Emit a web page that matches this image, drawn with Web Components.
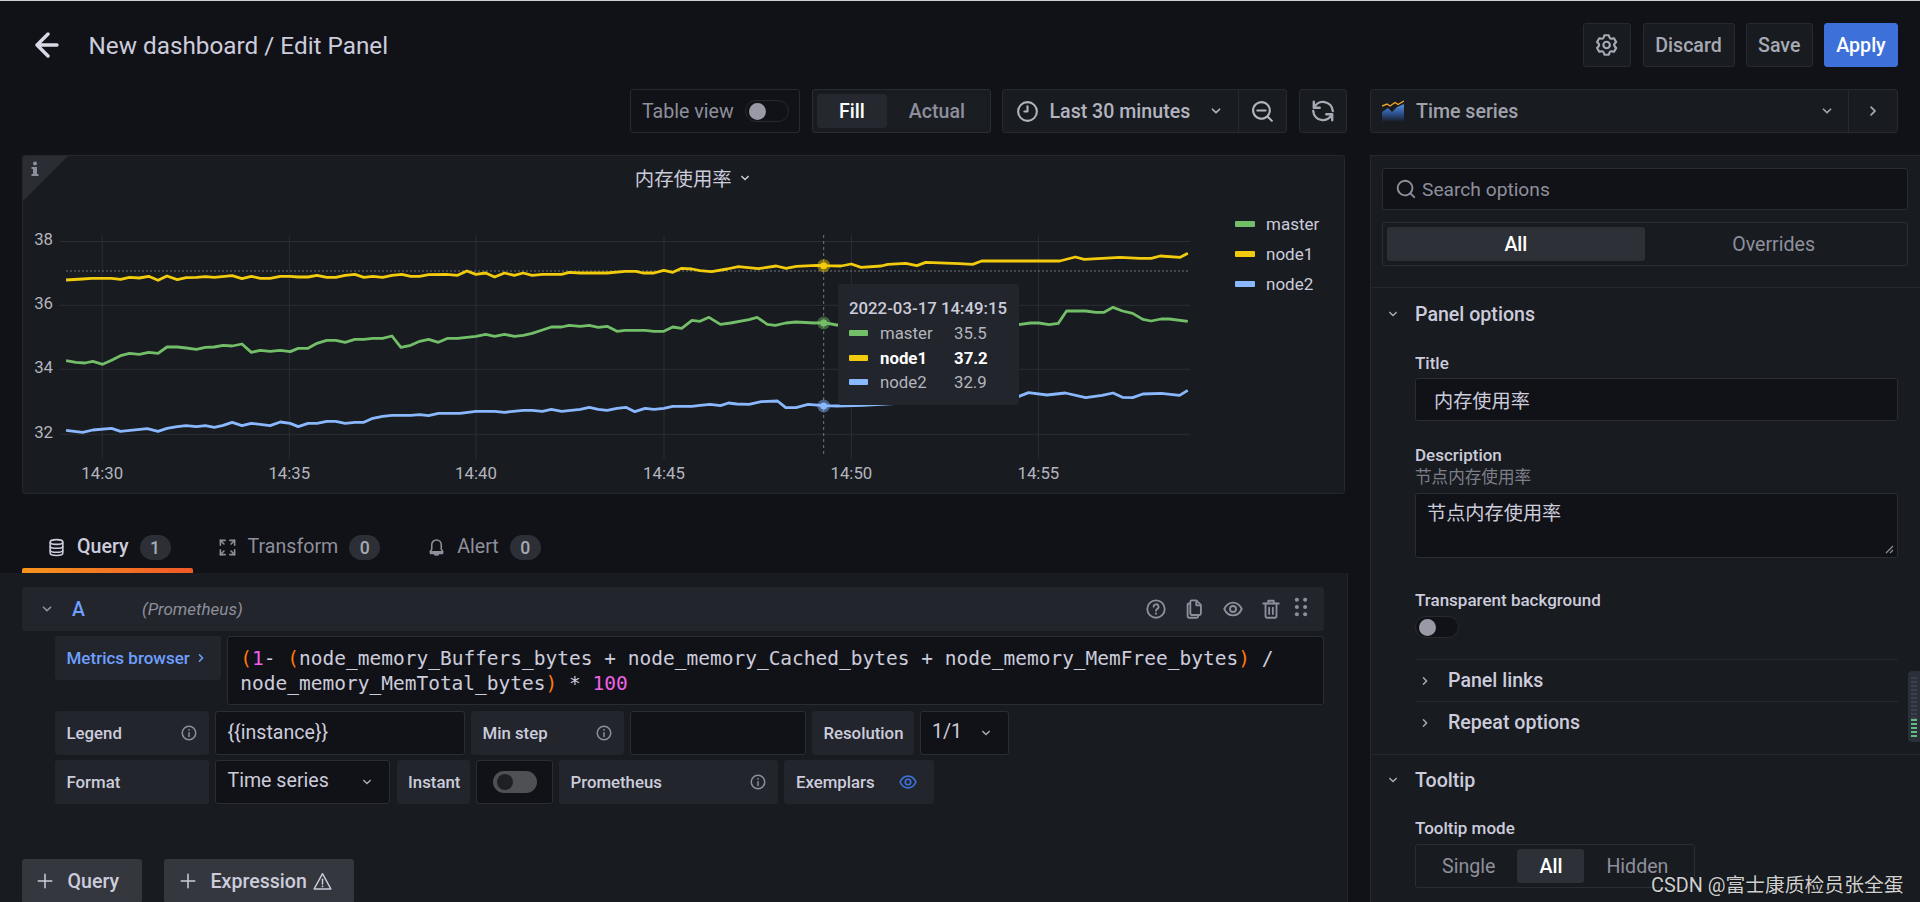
<!DOCTYPE html>
<html lang="zh">
<head>
<meta charset="utf-8">
<title>Edit Panel</title>
<style>
  html, body { margin: 0; background: #111217; }
  body { font-family: Roboto, "Noto Sans CJK SC", sans-serif; color: #ccccdc; }
</style>
</head>
<body>
<gf-page>
  <gf-header slot="header"></gf-header>
  <gf-subbar slot="subbar"></gf-subbar>
  <div slot="left">
    <gf-chart-panel></gf-chart-panel>
    <gf-query-tabs></gf-query-tabs>
    <gf-query-editor></gf-query-editor>
  </div>
  <gf-options slot="right"></gf-options>
</gf-page>

<script>
const ICONS = {
  down: `<path fill="currentColor" d="M17,9.17a1,1,0,0,0-1.41,0L12,12.71,8.46,9.17a1,1,0,0,0-1.41,0,1,1,0,0,0,0,1.42l4.24,4.24a1,1,0,0,0,1.42,0L17,10.59A1,1,0,0,0,17,9.17Z"/>`,
  right: `<path fill="currentColor" d="M14.83,11.29,10.59,7.05a1,1,0,0,0-1.42,0,1,1,0,0,0,0,1.41L12.71,12,9.17,15.54a1,1,0,0,0,0,1.41,1,1,0,0,0,.71.29,1,1,0,0,0,.71-.29l4.24-4.24A1,1,0,0,0,14.83,11.29Z"/>`,
  cog: `<path fill="currentColor" d="M19.9,12.66a1,1,0,0,1,0-1.32L21.18,9.9a1,1,0,0,0,.12-1.17l-2-3.46a1,1,0,0,0-1.07-.48l-1.88.38a1,1,0,0,1-1.15-.66l-.61-1.83A1,1,0,0,0,13.64,2h-4a1,1,0,0,0-1,.68L8.08,4.51a1,1,0,0,1-1.15.66L5,4.79A1,1,0,0,0,4,5.27L2,8.73A1,1,0,0,0,2.1,9.9l1.27,1.44a1,1,0,0,1,0,1.32L2.1,14.1A1,1,0,0,0,2,15.27l2,3.46a1,1,0,0,0,1.07.48l1.88-.38a1,1,0,0,1,1.15.66l.61,1.83a1,1,0,0,0,1,.68h4a1,1,0,0,0,.95-.68l.61-1.83a1,1,0,0,1,1.15-.66l1.88.38a1,1,0,0,0,1.07-.48l2-3.46a1,1,0,0,0-.12-1.17ZM18.41,14l.8.9-1.28,2.22-1.18-.24a3,3,0,0,0-3.45,2L12.92,20H10.36L10,18.86a3,3,0,0,0-3.45-2l-1.18.24L4.07,14.89l.8-.9a3,3,0,0,0,0-4l-.8-.9L5.35,6.89l1.18.24a3,3,0,0,0,3.45-2L10.36,4h2.56l.38,1.14a3,3,0,0,0,3.45,2l1.18-.24,1.28,2.22-.8.9A3,3,0,0,0,18.41,14ZM11.64,8a4,4,0,1,0,4,4A4,4,0,0,0,11.64,8Zm0,6a2,2,0,1,1,2-2A2,2,0,0,1,11.64,14Z"/>`,
  clock: `<path fill="currentColor" d="M12,2A10,10,0,1,0,22,12,10,10,0,0,0,12,2Zm0,18a8,8,0,1,1,8-8A8,8,0,0,1,12,20Zm0-14a1,1,0,0,0-1,1v4H9a1,1,0,0,0,0,2h3a1,1,0,0,0,1-1V7A1,1,0,0,0,12,6Z"/>`,
  search: `<path fill="currentColor" d="M21.71,20.29,18,16.61A9,9,0,1,0,16.61,18l3.68,3.68a1,1,0,0,0,1.42,0A1,1,0,0,0,21.71,20.29ZM11,18a7,7,0,1,1,7-7A7,7,0,0,1,11,18Z"/>`,
  zoomout: `<path fill="currentColor" d="M21.71,20.29,18,16.61A9,9,0,1,0,16.61,18l3.68,3.68a1,1,0,0,0,1.42,0A1,1,0,0,0,21.71,20.29ZM11,18a7,7,0,1,1,7-7A7,7,0,0,1,11,18ZM15,10H7a1,1,0,0,0,0,2h8a1,1,0,0,0,0-2Z"/>`,
  sync: `<g fill="none" stroke="currentColor" stroke-width="2.200" stroke-linecap="round" stroke-linejoin="round"><path d="M3.500 3.500v5.500H9"/><path d="M20.500 20.500V15H15"/><path d="M3.800 9A9 9 0 0 1 21 12"/><path d="M20.200 15A9 9 0 0 1 3 12"/></g>`,
  info: `<g fill="none" stroke="currentColor" stroke-width="2" stroke-linecap="round"><circle cx="12" cy="12" r="9"/><path d="M12 11.500v5"/></g><circle cx="12" cy="7.800" r="1.200" fill="currentColor"/>`,
  help: `<g fill="none" stroke="currentColor" stroke-width="2" stroke-linecap="round"><circle cx="12" cy="12" r="9.500"/><path d="M9.400 9.500a2.700 2.700 0 1 1 4 2.400c-.9.500-1.400 1-1.400 2"/></g><circle cx="12" cy="17" r="1.200" fill="currentColor"/>`,
  copy: `<g fill="none" stroke="currentColor" stroke-width="2" stroke-linejoin="round"><path d="M9.500 2.500h5l5 5V17a1.500 1.500 0 0 1-1.500 1.500H9.500A1.500 1.500 0 0 1 8 17V4a1.500 1.500 0 0 1 1.500-1.500Z"/><path d="M14.500 2.500V8h5"/><path d="M8 6H6.500A1.500 1.500 0 0 0 5 7.500V20a1.500 1.500 0 0 0 1.500 1.500H15a1.500 1.500 0 0 0 1.500-1.500v-1.500"/></g>`,
  eye: `<g fill="none" stroke="currentColor" stroke-width="2"><path d="M2.500 12C5 6.500 8.500 5 12 5s7 1.500 9.500 7C19 17.500 15.500 19 12 19S5 17.500 2.500 12Z"/><circle cx="12" cy="12" r="3.300"/></g>`,
  trash: `<g fill="none" stroke="currentColor" stroke-width="2" stroke-linecap="round" stroke-linejoin="round"><path d="M3.500 6h17"/><path d="M9 6V3h6v3"/><path d="M6 6v14a1.500 1.500 0 0 0 1.500 1.500h9A1.500 1.500 0 0 0 18 20V6"/><path d="M10 10.500v7M14 10.500v7"/></g>`,
  grip: `<g fill="currentColor"><circle cx="7.500" cy="4" r="2.200"/><circle cx="16.500" cy="4" r="2.200"/><circle cx="7.500" cy="12" r="2.200"/><circle cx="16.500" cy="12" r="2.200"/><circle cx="7.500" cy="20" r="2.200"/><circle cx="16.500" cy="20" r="2.200"/></g>`,
  database: `<g fill="none" stroke="currentColor" stroke-width="2"><ellipse cx="12" cy="5" rx="8" ry="3"/><path d="M4 5v14c0 1.700 3.600 3 8 3s8-1.300 8-3V5"/><path d="M4 10c0 1.700 3.600 3 8 3s8-1.300 8-3"/><path d="M4 15c0 1.700 3.600 3 8 3s8-1.300 8-3"/></g>`,
  transform: `<g fill="none" stroke="currentColor" stroke-width="2" stroke-linecap="round" stroke-linejoin="round"><path d="M3 9V3h6"/><path d="M3 3l4.500 4.500"/><path d="M15 3h6v6"/><path d="M21 3l-4.500 4.500"/><path d="M21 15v6h-6"/><path d="M21 21l-4.500-4.500"/><path d="M9 21H3v-6"/><path d="M3 21l4.500-4.500"/></g>`,
  bell: `<g fill="none" stroke="currentColor" stroke-width="2" stroke-linecap="round" stroke-linejoin="round"><path d="M12 2.500a6 6 0 0 1 6 6V14l2 3.500H4L6 14V8.500a6 6 0 0 1 6-6Z"/><path d="M4.500 17.500h15v2h-15Z"/><path d="M9.500 19.500c0 1.300 1.100 2 2.500 2s2.500-.7 2.500-2"/></g>`,
  plus: `<path fill="none" stroke="currentColor" stroke-width="2" stroke-linecap="round" d="M12 3v18M3 12h18"/>`,
  warn: `<g fill="none" stroke="currentColor" stroke-width="1.600" stroke-linejoin="round" stroke-linecap="round"><path d="M12 3 2.500 20.500h19Z"/><path d="M12 9.500v5.500"/></g><circle cx="12" cy="17.700" r="1" fill="currentColor"/>`,
};

class GfIcon extends HTMLElement {
  connectedCallback() {
    const size = this.getAttribute("size") || 20;
    this.attachShadow({ mode: "open" }).innerHTML = `
      <style>:host { display: inline-flex; flex: none; }</style>
      <svg width="${size}" height="${size}" viewBox="0 0 24 24">${ICONS[this.getAttribute("name")]}</svg>`;
  }
}

// outlined toolbar button; "variant" is primary or left out
class GfButton extends HTMLElement {
  constructor() {
    super();
    this.attachShadow({ mode: "open" }).innerHTML = `
      <style>
        :host {
          display: inline-flex; align-items: center; justify-content: center; box-sizing: border-box;
          height: 44px; background: #181b1f; border: 1px solid #26292f; border-radius: 3px;
          color: #a7a9b4; font: 500 19.600px Roboto, sans-serif;
        }
        :host([variant="primary"]) { background: #3d71d9; border-color: #3d71d9; color: #fff; }
      </style>
      <slot></slot>`;
  }
}

class GfSwitch extends HTMLElement {
  constructor() {
    super();
    this.attachShadow({ mode: "open" }).innerHTML = `
      <style>
        :host { display: inline-block; box-sizing: border-box; width: 44px; height: 22px; border-radius: 11px;
                border: 1px solid #26292f; background: #111217; padding: 1.500px 3px; flex: none; }
        i { display: block; width: 17px; height: 17px; border-radius: 50%; background: #9a9aa6; }
        :host([dark]) { background: #4f5054; border: 0; padding: 3px 4px; }
        :host([dark]) i { background: #1e2024; width: 16px; height: 16px; }
      </style>
      <i></i>`;
  }
}

class GfRadio extends HTMLElement {
  connectedCallback() {
    const active = this.getAttribute("active");
    const items = this.getAttribute("options").split(",").map((o) =>
      `<span class="${o === active ? "on" : ""}">${o}</span>`).join("");
    this.attachShadow({ mode: "open" }).innerHTML = `
      <style>
        :host { display: inline-flex; box-sizing: border-box; height: 44px; padding: 4px; background: #111217;
                border: 1px solid #2a2d33; border-radius: 3px; font: 400 19.600px Roboto, sans-serif; color: #8e8f9c; }
        span { display: flex; align-items: center; justify-content: center; padding: 0 22px; border-radius: 3px; }
        .on { background: #2d3036; color: #fff; font-weight: 500; }
        :host([fill]) { display: flex; }
        :host([fill]) span { flex: 1; }
        :host([tint]) span { background: #1a1d21; }
        :host([tint]) span.on { background: #25282e; }
        :host([tint]) { background: #181b1f; }
        :host([panel]) { background: #181b1f; }
      </style>
      ${items}`;
  }
}

class GfHeader extends HTMLElement {
  constructor() {
    super();
    this.attachShadow({ mode: "open" }).innerHTML = `
      <style>
        :host { display: flex; align-items: center; height: 44px; padding: 0 22px 0 35px; }
        h1 { margin: 0 0 0 29.500px; font: 400 24.300px Roboto, sans-serif; color: #ccccdc; flex: 1; }
        gf-button { margin-left: 11.500px; }
        svg { flex: none; }
      </style>
      <svg width="24" height="26" viewBox="0 0 24 26"><path fill="none" stroke="#d8d9e6" stroke-width="3.400" stroke-linecap="round" stroke-linejoin="round" d="M22 13H2M13 2 2 13l11 11"/></svg>
      <h1>New dashboard / Edit Panel</h1>
      <gf-button style="width:48.500px"><gf-icon name="cog" size="26"></gf-icon></gf-button>
      <gf-button style="width:92px">Discard</gf-button>
      <gf-button style="width:66.500px">Save</gf-button>
      <gf-button variant="primary" style="width:74px">Apply</gf-button>`;
  }
}

class GfSubbar extends HTMLElement {
  constructor() {
    super();
    this.attachShadow({ mode: "open" }).innerHTML = `
      <style>
        :host { display: flex; height: 44px; margin-top: 22px; padding-left: 630px; padding-right: 22px; font: 500 19.600px Roboto, sans-serif; }
        .box { display: flex; align-items: center; box-sizing: border-box; height: 44px; border: 1px solid #26292f; border-radius: 3px; }
        .table { width: 170px; padding-left: 11px; font-weight: 400; color: #8e8f9c; gap: 11px; }
        .time { width: 285px; background: #181b1f; color: #b3b4c0; margin-left: 11px; }
        .time .pick { display: flex; align-items: center; width: 236px; height: 100%; box-sizing: border-box; padding: 0 12px 0 12px; border-right: 1px solid #26292f; }
        .time .pick span { margin-left: 10px; flex: 1; }
        .time .out { flex: 1; display: flex; justify-content: center; }
        .sync { width: 48.500px; margin-left: 12px; background: #181b1f; color: #a7a9b4; justify-content: center; }
        .viz { width: 527.500px; margin-left: 23px; background: #181b1f; color: #a0a2ad; }
        .viz .sel { display: flex; align-items: center; height: 100%; width: 478px; box-sizing: border-box; padding: 0 11px 0 11px; border-right: 1px solid #26292f; }
        .viz .sel span { margin-left: 12px; flex: 1; }
        .viz .next { flex: 1; display: flex; justify-content: center; }
        gf-radio { margin-left: 12px; font-weight: 500; }
      </style>
      <div class="box table">Table view <gf-switch></gf-switch></div>
      <gf-radio tint options="Fill,Actual" active="Fill" style="width:178.500px"></gf-radio>
      <div class="box time">
        <div class="pick"><gf-icon name="clock" size="25"></gf-icon><span>Last 30 minutes</span><gf-icon name="down" size="20"></gf-icon></div>
        <div class="out"><gf-icon name="zoomout" size="25"></gf-icon></div>
      </div>
      <div class="box sync"><gf-icon name="sync" size="26"></gf-icon></div>
      <div class="box viz">
        <div class="sel">
          <svg width="22" height="22" viewBox="0 0 22 22">
            <defs><linearGradient id="vg" x1="0" y1="0" x2="0" y2="1"><stop offset="0" stop-color="#5b8fe0"/><stop offset=".55" stop-color="#2c4f8c"/><stop offset="1" stop-color="#181b1f"/></linearGradient></defs>
            <path fill="url(#vg)" d="M0 12 6 8l4 4 5-5 7-3v18H0Z"/>
            <path fill="none" stroke="#f5a623" stroke-width="1.400" d="M0 6l5-2 3 2 5-3.500 3 2 6-3.500"/>
          </svg>
          <span>Time series</span><gf-icon name="down" size="20"></gf-icon>
        </div>
        <div class="next"><gf-icon name="right" size="22"></gf-icon></div>
      </div>`;
  }
}

// traced from the reference, in absolute page pixels after the two crop mappings below
const fromLeft = (p) => p.map(([x, y]) => [x / 2.24, y / 3 + 200]);
const fromRight = (p) => p.map(([x, y]) => [x / 2.45 + 700, y / 3 + 220]);
const SERIES = [
  { color: "#73bf69", pts: [
    ...fromLeft([[148,482],[170,487],[190,489],[208,484],[230,493],[250,481],[270,467],[290,460],[312,463],[333,457],[354,460],[374,441],[397,441],[417,444],[440,448],[460,442],[480,441],[500,436],[520,438],[542,432],[563,457],[583,451],[605,454],[628,451],[650,455],[668,445],[690,445],[710,430],[732,421],[752,421],[773,427],[795,418],[815,418],[835,415],[857,415],[878,408],[898,442],[920,436],[940,424],[960,418],[982,427],[1003,415],[1025,415],[1066,409],[1088,403],[1108,409],[1130,403],[1152,409],[1172,406],[1192,400],[1215,390],[1235,381],[1258,381],[1275,376],[1300,379],[1320,376],[1340,382],[1360,379],[1382,394],[1400,391],[1445,391],[1465,394],[1487,394],[1507,381],[1527,385],[1550,361],[1568,364]]),
    ...fromRight([[22,292],[50,313],[75,309],[120,299],[140,292],[165,313],[185,316],[210,309],[235,306],[280,309],[303,308],[335,315],[780,314],[810,309],[830,309],[855,314],[878,310],[898,273],[945,273],[970,277],[990,277],[1012,262],[1035,273],[1060,280],[1085,298],[1105,303],[1130,297],[1150,297],[1195,304]]),
  ], dot: [823.700, 323] },
  { color: "#f2cc0c", pts: [
    ...fromLeft([[148,240],[185,237],[205,235],[250,235],[270,238],[290,232],[312,234],[333,229],[354,241],[374,228],[397,239],[417,233],[440,232],[460,230],[480,232],[520,227],[542,236],[563,229],[583,235],[605,235],[628,229],[650,229],[668,231],[690,231],[710,226],[732,232],[752,232],[773,226],[795,223],[815,232],[835,229],[857,232],[878,226],[900,223],[920,229],[940,229],[960,224],[1000,223],[1025,226],[1046,213],[1066,223],[1088,219],[1108,231],[1130,219],[1152,226],[1172,219],[1192,226],[1215,223],[1258,223],[1275,217],[1300,219],[1360,219],[1400,214],[1425,214],[1440,219],[1465,219],[1487,211],[1507,217],[1527,205],[1550,207],[1568,212]]),
    ...[[205,815],[240,807],[265,800],[310,806],[350,798],[372,805],[395,799],[440,796],[456,797],[495,798],[518,792],[540,802],[585,798],[600,793],[640,790],[665,797],[685,787],[760,791],[790,793],[810,783],[925,783],[985,783],[1020,771],[1040,778],[1120,772],[1165,775],[1190,775],[1210,768],[1255,772],[1272,760]].map(([x, y]) => [x / 2.24 + 620, y / 3]),
  ], dot: [823.700, 265.700] },
  { color: "#8ab8ff", pts: [
    ...fromLeft([[148,691],[185,697],[208,690],[250,685],[270,694],[330,686],[354,694],[374,685],[397,680],[417,677],[440,680],[460,677],[480,682],[500,676],[520,667],[542,677],[563,670],[605,677],[628,666],[650,670],[668,680],[690,670],[710,670],[732,664],[752,664],[773,670],[795,667],[815,667],[835,655],[857,649],[878,646],[920,646],[940,644],[960,647],[982,640],[1030,640],[1066,634],[1108,634],[1130,637],[1172,631],[1192,631],[1215,634],[1235,628],[1258,634],[1300,628],[1320,622],[1340,628],[1360,631],[1382,625],[1402,622],[1422,635],[1445,625],[1465,628],[1487,625],[1507,619],[1550,619],[1568,616]]),
    ...fromRight([[25,553],[50,557],[70,549],[90,552],[120,553],[150,545],[190,543],[210,563],[235,563],[265,553],[303,557],[335,558],[400,556],[780,530],[805,518],[850,525],[895,519],[945,533],[985,526],[1012,519],[1035,532],[1060,533],[1085,522],[1130,520],[1175,526],[1195,511]]),
  ], dot: [823.700, 406] },
];

class GfChartPanel extends HTMLElement {
  constructor() {
    super();
    const grid = "#2b2e34";
    const hTicks = [[38, 241.500], [36, 305.300], [34, 369.300], [32, 434.300]];
    const vTicks = [["14:30", 102.200], ["14:35", 289.300], ["14:40", 476], ["14:45", 664], ["14:50", 851.400], ["14:55", 1038.400]];
    const lines = SERIES.map((s) =>
      `<polyline fill="none" stroke="${s.color}" stroke-width="2.800" stroke-linejoin="round" points="${s.pts.map((p) => p.join(",")).join(" ")}"/>`).join("");
    const dots = SERIES.map((s) =>
      `<circle cx="${s.dot[0]}" cy="${s.dot[1]}" r="6.500" fill="${s.color}" opacity=".45"/><circle cx="${s.dot[0]}" cy="${s.dot[1]}" r="3.500" fill="${s.color}"/>`).join("");
    const legend = [["master", "#73bf69"], ["node1", "#f2cc0c"], ["node2", "#8ab8ff"]];
    const tipRows = [["master", "35.5", "#73bf69"], ["node1", "37.2", "#f2cc0c", true], ["node2", "32.9", "#8ab8ff"]];

    this.attachShadow({ mode: "open" }).innerHTML = `
      <style>
        :host { display: block; position: relative; box-sizing: border-box; height: 339px; margin-left: 22px; width: 1322.500px;
                background: #181b1f; border: 1px solid #24272d; border-radius: 3px; overflow: hidden; }
        .corner { position: absolute; left: 0; top: 0; width: 0; height: 0; border-top: 45px solid #2a2d33; border-right: 45px solid transparent; }
        .corner-i { position: absolute; left: 6px; top: 5px; }
        .title { display: flex; align-items: center; justify-content: center; height: 45px; padding: 0 0 2px 22px; box-sizing: border-box; font: 400 19.400px Roboto, "Noto Sans CJK SC", sans-serif; color: #ccccdc; gap: 4px; }
        .body { display: flex; }
        svg.plot { display: block; flex: none; }
        svg text { font: 400 16.800px Roboto, sans-serif; fill: #b4b5bf; }
        .legend { margin-left: 44px; padding-top: 8px; font: 400 17px Roboto, sans-serif; color: #ccccdc; }
        .legend div { display: flex; align-items: center; height: 30px; }
        .legend i { display: block; width: 20px; height: 6px; border-radius: 1px; margin-right: 11px; }
        .tip { position: absolute; left: 815px; top: 128px; width: 180.500px; height: 121px; box-sizing: border-box; padding: 13px 11px;
               background: #22252b; border-radius: 3px; font: 400 16.800px Roboto, sans-serif; color: #b4b5bf; }
        .tip b { display: block; font-weight: 500; color: #ccccdc; font-size: 16.800px; line-height: 22px; white-space: nowrap; margin-bottom: 2px; }
        .tip .row { display: flex; align-items: center; height: 24.500px; }
        .tip i { display: block; width: 19px; height: 6px; border-radius: 1px; margin-right: 12px; }
        .tip .name { width: 74px; }
        .tip .strong { font-weight: 700; color: #fff; }
      </style>
      <div class="corner"></div>
      <svg class="corner-i" width="12" height="16" viewBox="0 0 12 16"><circle cx="6" cy="2.500" r="2" fill="#8e8f9c"/><path fill="#8e8f9c" d="M2.500 6h5.500v7h1.500v2H2.500v-2H4V8H2.500Z"/></svg>
      <div class="title">内存使用率 <gf-icon name="down" size="18"></gf-icon></div>
      <div class="body">
        <svg class="plot" width="1168" height="293" viewBox="23 201 1168 293">
          ${hTicks.map(([, y]) => `<line x1="60" x2="1190" y1="${y}" y2="${y}" stroke="${grid}"/>`).join("")}
          ${vTicks.map(([, x]) => `<line x1="${x}" x2="${x}" y1="235" y2="459" stroke="${grid}"/>`).join("")}
          ${hTicks.map(([v, y]) => `<text x="53" y="${y + 3.500}" text-anchor="end">${v}</text>`).join("")}
          ${vTicks.map(([t, x]) => `<text x="${x}" y="479" text-anchor="middle">${t}</text>`).join("")}
          <line x1="66" x2="1190" y1="271" y2="271" stroke="#6f7780" stroke-dasharray="2 2"/>
          <line x1="823.700" x2="823.700" y1="235" y2="454" stroke="#6f7780" stroke-dasharray="3 3"/>
          ${lines}${dots}
        </svg>
        <div class="legend">${legend.map(([n, c]) => `<div><i style="background:${c}"></i>${n}</div>`).join("")}</div>
      </div>
      <div class="tip">
        <b>2022-03-17 14:49:15</b>
        ${tipRows.map(([n, v, c, s]) => `<div class="row ${s ? "strong" : ""}"><i style="background:${c}"></i><span class="name">${n}</span><span>${v}</span></div>`).join("")}
      </div>`;
  }
}

class GfQueryTabs extends HTMLElement {
  constructor() {
    super();
    const tabs = [["database", "Query", "1", true], ["transform", "Transform", "0"], ["bell", "Alert", "0"]];
    this.attachShadow({ mode: "open" }).innerHTML = `
      <style>
        :host { display: flex; height: 79px; padding: 41px 0 0 22px; box-sizing: border-box; font: 500 19.600px Roboto, sans-serif; color: #8e8f9c; }
        .tab .row { display: flex; align-items: center; height: 25px; padding: 0 22px 0 25px; }
        .tab .line { height: 5px; margin-top: 8px; border-radius: 2px 2px 0 0; }
        .on { color: #ccccdc; }
        .on .line { background: linear-gradient(90deg, #f7941d, #f05a28); }
        .label { margin: 0 11px 0 11px; font-weight: 400; position: relative; top: -1px; }
        .on .label { font-weight: 500; }
        .badge { display: flex; align-items: center; justify-content: center; min-width: 31px; height: 25px; border-radius: 13px; background: #2c3036; color: #a7a9b4; font-size: 17.600px; }
      </style>
      ${tabs.map(([i, t, n, on]) => `
        <div class="tab ${on ? "on" : ""}">
          <div class="row"><gf-icon name="${i}" size="19"></gf-icon><span class="label">${t}</span><span class="badge">${n}</span></div>
          <div class="line"></div>
        </div>`).join("")}`;
  }
}

// grey caption cell of the query form
class GfLabel extends HTMLElement {
  constructor() {
    super();
    this.attachShadow({ mode: "open" }).innerHTML = `
      <style>
        :host { display: flex; align-items: center; justify-content: space-between; box-sizing: border-box; height: 44px;
                padding: 0 11.500px; background: #22252b; border-radius: 3px; font: 500 16.800px Roboto, sans-serif; color: #ccccdc; flex: none; white-space: nowrap; }
        ::slotted(gf-icon) { color: #8e8f9c; }
      </style>
      <slot></slot>`;
  }
}

// dark value cell of the query form
class GfField extends HTMLElement {
  constructor() {
    super();
    this.attachShadow({ mode: "open" }).innerHTML = `
      <style>
        :host { display: flex; align-items: center; justify-content: space-between; box-sizing: border-box; height: 44px;
                padding: 0 13px 0 11px; background: #111217; border: 1px solid #2a2d33; border-radius: 3px;
                font: 400 19.600px Roboto, "Noto Sans CJK SC", sans-serif; color: #ccccdc; flex: none; }
        ::slotted(gf-icon) { color: #a7a9b4; }
        ::slotted(span) { margin-top: -3px; }
      </style>
      <slot></slot>`;
  }
}

class GfQueryEditor extends HTMLElement {
  constructor() {
    super();
    this.attachShadow({ mode: "open" }).innerHTML = `
      <style>
        :host { display: block; box-sizing: border-box; width: 1347.500px; height: 329px; padding: 14px 22.500px 0 22px;
                background: #181b1f; border-right: 1px solid #22252b; overflow: hidden; }
        .head { display: flex; align-items: center; height: 44px; padding: 0 12.500px 0 15px; background: #22252b; border-radius: 3px; color: #8e8f9c; }
        .letter { width: 70px; margin-left: 15px; font: 500 19.500px Roboto, sans-serif; color: #6e9fff; }
        .src { flex: 1; font: italic 400 17px Roboto, sans-serif; }
        .actions { display: flex; align-items: center; gap: 16.500px; }
        .actions .dots { margin-left: -9px; position: relative; top: -2px; }
        .rows { padding-left: 33px; }
        .row { display: flex; gap: 6.300px; margin-top: 5.500px; }
        .metrics { width: 166px; color: #6e9fff; font-size: 17px; gap: 2px; justify-content: flex-start; }
        .code { flex: 1; box-sizing: border-box; height: 69px; padding: 9px 12px; background: #111217; border: 1px solid #2a2d33; border-radius: 3px;
                font: 400 19.500px/25px "DejaVu Sans Mono", monospace; color: #ccccdc; white-space: pre; overflow: hidden; }
        .code div { height: 25px; }
        .p { color: #ff780a; }
        .n { color: #ef62e6; }
        .add { display: flex; gap: 22px; margin-top: 55px; }
        .btn { display: flex; align-items: center; box-sizing: border-box; height: 44px; padding-left: 14px; background: #34373d; border-radius: 3px; font: 500 19.600px Roboto, sans-serif; color: #ccccdc; }
        .btn gf-icon { margin-right: 13.500px; }
        .btn gf-icon[name="warn"] { margin: 0 0 0 5px; }
      </style>
      <div class="head">
        <gf-icon name="down" size="20"></gf-icon>
        <span class="letter">A</span>
        <span class="src">(Prometheus)</span>
        <div class="actions">
          <gf-icon name="help" size="22"></gf-icon>
          <gf-icon name="copy" size="22"></gf-icon>
          <gf-icon name="eye" size="22"></gf-icon>
          <gf-icon name="trash" size="22"></gf-icon>
          <gf-icon class="dots" name="grip" size="22"></gf-icon>
        </div>
      </div>
      <div class="rows">
        <div class="row" style="margin-top:5px; align-items:flex-start">
          <gf-label class="metrics">Metrics browser<gf-icon name="right" size="18" style="color:#6e9fff"></gf-icon></gf-label>
          <div class="code"><div><span class="p">(</span><span class="n">1</span>- <span class="p">(</span>node_memory_Buffers_bytes + node_memory_Cached_bytes + node_memory_MemFree_bytes<span class="p">)</span> /</div><div>node_memory_MemTotal_bytes<span class="p">)</span> * <span class="n">100</span></div></div>
        </div>
        <div class="row">
          <gf-label style="width:154.200px">Legend <gf-icon name="info" size="18"></gf-icon></gf-label>
          <gf-field style="width:249.200px">{{instance}}</gf-field>
          <gf-label style="width:153.200px">Min step <gf-icon name="info" size="18"></gf-icon></gf-label>
          <gf-field style="width:175.200px"></gf-field>
          <gf-label style="width:101.700px">Resolution</gf-label>
          <gf-field style="width:88.700px"><span>1/1</span> <gf-icon name="down" size="18"></gf-icon></gf-field>
        </div>
        <div class="row">
          <gf-label style="width:154.200px">Format</gf-label>
          <gf-field style="width:174.800px"><span>Time series</span> <gf-icon name="down" size="18"></gf-icon></gf-field>
          <gf-label style="width:73.500px">Instant</gf-label>
          <gf-field style="width:76.300px; justify-content:center; padding:0"><gf-switch dark></gf-switch></gf-field>
          <gf-label style="width:219.200px">Prometheus <gf-icon name="info" size="18"></gf-icon></gf-label>
          <gf-label style="width:150px">Exemplars <gf-icon name="eye" size="20" style="color:#3d71d9; margin-right:5px"></gf-icon></gf-label>
        </div>
      </div>
      <div class="add">
        <div class="btn" style="width:120px"><gf-icon name="plus" size="18"></gf-icon>Query</div>
        <div class="btn" style="width:189.500px; padding-left:15px"><gf-icon name="plus" size="18"></gf-icon>Expression<gf-icon name="warn" size="21"></gf-icon></div>
      </div>`;
  }
}

class GfOptions extends HTMLElement {
  constructor() {
    super();
    this.attachShadow({ mode: "open" }).innerHTML = `
      <style>
        :host { display: block; position: relative; box-sizing: border-box; height: 747px; background: #181b1f; margin-left: -.5px;
                border-left: 1px solid #24272d; border-top: 1px solid #24272d; overflow: hidden; font-family: Roboto, "Noto Sans CJK SC", sans-serif; }
        .top { padding: 12px 12.500px 21px 11px; border-bottom: 1px solid #24272d; }
        .search { display: flex; align-items: center; box-sizing: border-box; height: 42px; padding: 0 12px; gap: 5px; background: #111217; border: 1px solid #2a2d33; border-radius: 3px; color: #8e8f9c; font-size: 19.200px; }
        gf-radio { margin-top: 12px; }
        .sec { height: 52px; display: flex; align-items: center; padding-left: 13px; gap: 13px; font-size: 19.600px; font-weight: 500; color: #ccccdc; }
        .sec gf-icon { color: #a7a9b4; }
        .body { padding: 13px 22.500px 0 44px; }
        .lbl { font-size: 17px; font-weight: 500; line-height: 20px; color: #ccccdc; }
        .sub { font-size: 16.600px; line-height: 20px; color: #7d7e8a; margin-top: 3px; }
        .in { box-sizing: border-box; background: #111217; border: 1px solid #2a2d33; border-radius: 3px; margin-top: 5px; color: #ccccdc; font-size: 19.200px; }
        .title-in { display: flex; align-items: center; height: 43px; padding-left: 18px; margin-bottom: 24px; }
        .desc { position: relative; height: 65px; padding: 4px 11px; margin-top: 5px; margin-bottom: 32px; }
        .grip { position: absolute; right: 3px; bottom: 3px; }
        gf-switch { display: block; margin-top: 6px; }
        .link { display: flex; align-items: center; height: 41px; padding-left: 1px; gap: 14px; border-top: 1px solid #24272d; font-size: 19.600px; font-weight: 500; color: #ccccdc; }
        .link gf-icon { color: #a7a9b4; }
        .links { margin: 21px 0 11px; }
        .tail { border-top: 1px solid #24272d; }
        .tail .sec { height: 50px; }
        .tail gf-radio { margin-top: 6px; display: inline-flex; }
        .mini { position: absolute; right: 0; top: 515px; width: 12px; height: 71px; box-sizing: border-box; padding: 6px 3px; background: #2a2f3a; border-radius: 4px 0 0 4px; }
        .mini div { height: 42px; background: repeating-linear-gradient(#3a404c 0 2px, transparent 2px 4px); }
        .mini p { margin: 0; height: 18px; background: repeating-linear-gradient(#5fbf7f 0 2px, transparent 2px 4px); }
      </style>
      <div class="top">
        <div class="search"><gf-icon name="search" size="22"></gf-icon>Search options</div>
        <gf-radio fill panel options="All,Overrides" active="All"></gf-radio>
      </div>
      <div class="sec"><gf-icon name="down" size="18"></gf-icon>Panel options</div>
      <div class="body">
        <div class="lbl">Title</div>
        <div class="in title-in">内存使用率</div>
        <div class="lbl">Description</div>
        <div class="sub">节点内存使用率</div>
        <div class="in desc">节点内存使用率
          <svg class="grip" width="9" height="9" viewBox="0 0 9 9"><path stroke="#8e8f9c" stroke-width="1.200" d="M1 8 8 1M5 8l3-3"/></svg>
        </div>
        <div class="lbl">Transparent background</div>
        <gf-switch></gf-switch>
        <div class="links">
          <div class="link"><gf-icon name="right" size="18"></gf-icon>Panel links</div>
          <div class="link"><gf-icon name="right" size="18"></gf-icon>Repeat options</div>
        </div>
      </div>
      <div class="tail">
        <div class="sec"><gf-icon name="down" size="18"></gf-icon>Tooltip</div>
        <div class="body">
          <div class="lbl">Tooltip mode</div>
          <gf-radio panel options="Single,All,Hidden" active="All"></gf-radio>
        </div>
      </div>
      <div class="mini"><div></div><p></p></div>`;
  }
}

class GfPage extends HTMLElement {
  constructor() {
    super();
    this.attachShadow({ mode: "open" }).innerHTML = `
      <style>
        :host { display: block; position: relative; height: 902px; overflow: hidden; box-sizing: border-box; border-top: 1px solid #d0d0d0; padding-top: 22px; }
        .main { display: grid; grid-template-columns: 1347.500px 1fr; column-gap: 23px; margin-top: 22px; }
        .mark { position: absolute; right: 16.500px; top: 868px; font: 400 19.800px Roboto, "Noto Sans CJK SC", sans-serif; color: #d0d0d0; white-space: nowrap; text-shadow: 0 0 1px #000; }
      </style>
      <slot name="header"></slot>
      <slot name="subbar"></slot>
      <div class="main"><slot name="left"></slot><slot name="right"></slot></div>
      <div class="mark">CSDN @富士康质检员张全蛋</div>`;
  }
}

customElements.define("gf-icon", GfIcon);
customElements.define("gf-button", GfButton);
customElements.define("gf-switch", GfSwitch);
customElements.define("gf-radio", GfRadio);
customElements.define("gf-label", GfLabel);
customElements.define("gf-field", GfField);
customElements.define("gf-header", GfHeader);
customElements.define("gf-subbar", GfSubbar);
customElements.define("gf-chart-panel", GfChartPanel);
customElements.define("gf-query-tabs", GfQueryTabs);
customElements.define("gf-query-editor", GfQueryEditor);
customElements.define("gf-options", GfOptions);
customElements.define("gf-page", GfPage);
</script>
</body>
</html>
